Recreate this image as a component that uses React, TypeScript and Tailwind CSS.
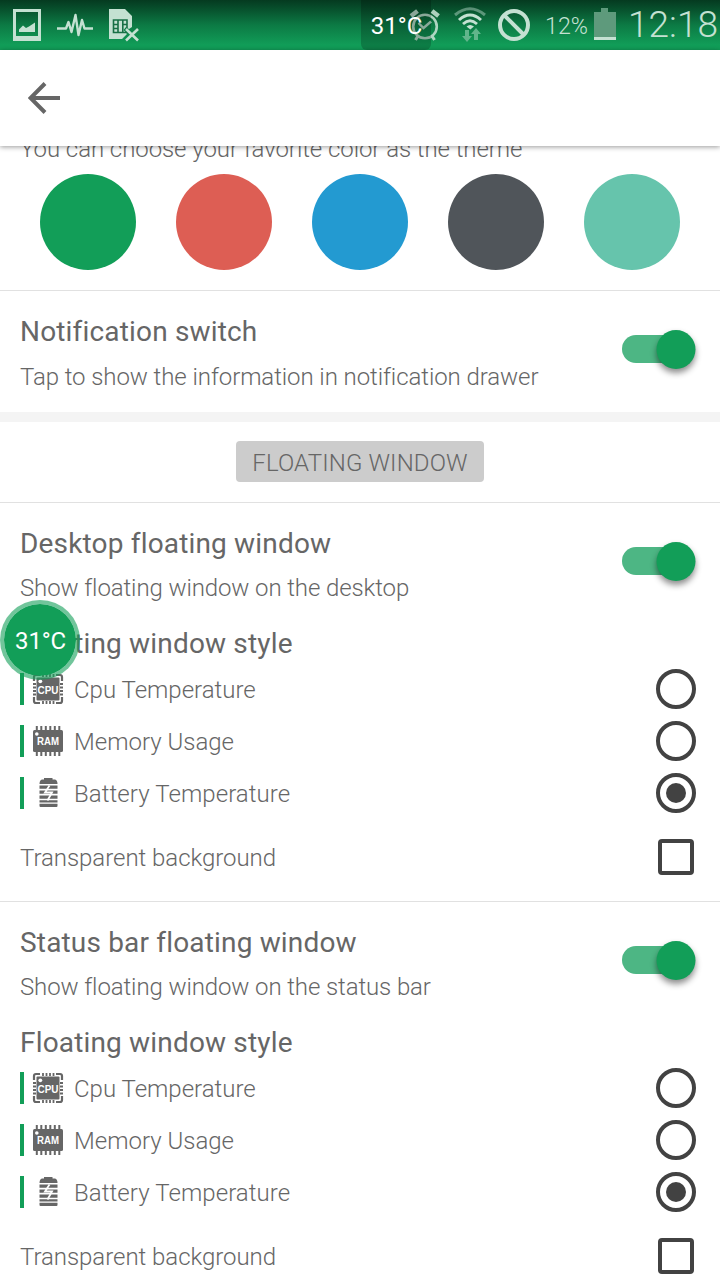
import { useState } from "react";

const THEME_COLORS = ["#129e58", "#dd5e54", "#239ad1", "#50555a", "#66c4ac"];

const STYLES = ["Cpu Temperature", "Memory Usage", "Battery Temperature"];

function StatusBar() {
  return (
    <header className="relative h-[50px] shrink-0 overflow-hidden bg-linear-to-b from-[#053a20] via-[#0c7a44] via-50% to-[#119d58] to-90%">
      <svg
        width="720"
        height="50"
        viewBox="0 0 720 50"
        fill="none"
        stroke="#c4e1d2"
      >
        {/* picture */}
        <path
          d="M13 9H41V41H13ZM16 12V36H38V12Z"
          fill="#c4e1d2"
          fillRule="evenodd"
          stroke="none"
        />
        <path d="M19 32V29.500L23 25.500L26 28L29 26.500L35 22.500V32Z" fill="#c4e1d2" stroke="none" />

        {/* pulse */}
        <path
          d="M57 28.500H66L68.500 22L71.500 32L75.500 15L78.500 35L82 20L84.500 28.500H93"
          strokeWidth="2.400"
          strokeLinejoin="round"
        />

        {/* missing sim */}
        <path
          d="M109 9H125L132 16V27L129 29L126 27L123.500 30L127 34L122 39H109Z"
          fill="#c4e1d2"
          stroke="none"
        />
        <path
          d="M113.500 20H127V32.500H113.500ZM118 20V33M122.800 20V33M113.500 24.500H118M123 24.500H127M113.500 28.500H118"
          stroke="#176f45"
          strokeWidth="1.600"
        />
        <path d="M126 29L138 40.500M138 29L126 40.500" strokeWidth="2.600" />

        {/* alarm */}
        <g opacity=".88">
          <circle cx="425" cy="26.500" r="11.800" strokeWidth="2.600" />
          <path d="M418.500 23L423.500 28L431 21.500" strokeWidth="2.400" />
          <path d="M411 16L417.500 11M432 11L438.500 16" strokeWidth="4.500" />
          <path d="M418 36L415.500 40M432 36L434.500 40" strokeWidth="3" />
        </g>

        {/* wifi */}
        <path d="M455 15Q470 2.500 485 15" strokeWidth="3" opacity=".45" />
        <path d="M459 20Q470 10 481 20" strokeWidth="3" />
        <path d="M463 24Q470 17.500 477 24" strokeWidth="2.800" />
        <path d="M466.500 26.500Q470 23.500 474 26.500L470.300 29.500Z" fill="#c4e1d2" stroke="none" />
        <path
          d="M465 30H469V36H472L467 42L462 36H465ZM474 40H478V34H481L476 28L471 34H474Z"
          fill="#61b58b"
          stroke="none"
        />

        {/* blocked */}
        <circle cx="514" cy="25" r="14" strokeWidth="4" />
        <path d="M504 15L524 35" strokeWidth="4" />

        {/* battery */}
        <path d="M594 12H601V8H608V12H616V37H594Z" fill="#5e9a7c" stroke="none" />
        <path d="M594 37H616V40H594Z" fill="#c4e1d2" stroke="none" />

        <text x="545" y="34" fontSize="24" fill="#c4e1d2" stroke="none" textLength="43" lengthAdjust="spacingAndGlyphs" fontWeight="300">
          12%
        </text>
        <text x="628" y="37" fontSize="37" fontWeight="300" fill="#c4e1d2" stroke="none" textLength="90">
          12:18
        </text>
      </svg>
      <div className="absolute top-0 left-[361px] h-[50px] w-[70px] rounded-b-md bg-black/20 pl-px text-center text-2xl leading-[52px] text-white">
        31°C
      </div>
    </header>
  );
}

function Toggle() {
  const [on, setOn] = useState(true);

  return (
    <button
      role="switch"
      aria-checked={on}
      onClick={() => setOn(!on)}
      className={`flex h-7 w-[73px] items-center rounded-full ${on ? "justify-end bg-[#4db684]" : "justify-start bg-gray-300"}`}
    >
      <span className="size-[39px] shrink-0 translate-x-[0.5px] rounded-full bg-[#129e58] shadow-[0_4px_6px_rgba(0,0,0,0.45)]" />
    </button>
  );
}

function CpuIcon() {
  return (
    <svg width="32" height="32" viewBox="0 0 32 32" fill="#666">
      <path
        d="M8 2H4Q2 2 2 4V8M24 2H28Q30 2 30 4V8M2 24V28Q2 30 4 30H8M24 30H28Q30 30 30 28V24"
        fill="none"
        stroke="#666"
        strokeWidth="2.200"
      />
      <path
        d="M11 1V4M14.500 1V4M18 1V4M21.500 1V4M11 28V31M14.500 28V31M18 28V31M21.500 28V31M1 11H4M1 14.500H4M1 18H4M1 21.500H4M28 11H31M28 14.500H31M28 18H31M28 21.500H31"
        stroke="#666"
        strokeWidth="1.800"
      />
      <rect x="4.500" y="4.500" width="23" height="23" rx="1" />
      <circle cx="8.300" cy="8.300" r="1.900" fill="white" />
      <text
        x="5.500"
        y="20.500"
        fontSize="10"
        fontWeight="700"
        fill="white"
        textLength="21"
        lengthAdjust="spacingAndGlyphs"
        className="font-['Liberation_Sans',sans-serif]"
      >
        CPU
      </text>
    </svg>
  );
}

function RamIcon() {
  return (
    <svg width="32" height="32" viewBox="0 0 32 32" fill="#666">
      <path
        d="M4.800 1V31M9.300 1V31M13.800 1V31M18.300 1V31M22.800 1V31M27.300 1V31"
        stroke="#666"
        strokeWidth="2"
      />
      <rect x="1" y="5" width="30" height="22" rx="1.500" />
      <circle cx="4.800" cy="9" r="1.800" fill="white" />
      <text
        x="5"
        y="19.500"
        fontSize="10"
        fontWeight="700"
        fill="white"
        textLength="22"
        lengthAdjust="spacingAndGlyphs"
        className="font-['Liberation_Sans',sans-serif]"
      >
        RAM
      </text>
    </svg>
  );
}

function BatteryIcon() {
  return (
    <svg width="32" height="32" viewBox="0 0 32 32" fill="#666">
      <path d="M12 1H20.500V2.500H23Q25.500 3 25.500 7H7.500Q7.500 3 10 2.500H12Z" />
      <path d="M7.500 8.500H25.500V11.700H7.500ZM7.500 13.500H25.500V16.700H7.500ZM7.500 18.500H25.500V21.700H7.500ZM7.500 23.300H25.500V25.500H7.500ZM7.500 26.700H25.500V29Q25.500 30 24.500 30H8.500Q7.500 30 7.500 29Z" />
      <path
        d="M17.500 8.500L13 15.500H20L15.500 23.500"
        fill="none"
        stroke="white"
        strokeWidth="1.800"
      />
    </svg>
  );
}

const ICONS = [CpuIcon, RamIcon, BatteryIcon];

function WindowSection({ title, text }: { title: string; text: string }) {
  const [selected, setSelected] = useState(2);
  const [transparent, setTransparent] = useState(false);

  return (
    <section className="h-[399px] shrink-0 border-b border-[#e1e1e1] px-5 pt-6">
      <div className="flex justify-between pr-[5px]">
        <div>
          <h2 className="text-[28px] leading-[33px] tracking-[0.17px]">
            {title}
          </h2>
          <p className="mt-3.5 text-2xl leading-7 font-light tracking-[-0.11px]">
            {text}
          </p>
        </div>
        <div className="pt-5">
          <Toggle />
        </div>
      </div>
      <h3 className="mt-[25px] text-[28px] leading-[33px] tracking-[0.17px]">
        Floating window style
      </h3>
      <div className="mt-[3px]">
        {STYLES.map((name, i) => {
          const Icon = ICONS[i];
          return (
            <button
              key={name}
              onClick={() => setSelected(i)}
              className="flex h-[52px] w-full items-center pr-1 text-2xl font-light"
            >
              <span className="mr-2 h-8 w-1 bg-[#129e58]" />
              <Icon />
              <span
                className={`ml-2.5 pt-0.5 ${i === 2 ? "tracking-[0.08px]" : ""}`}
              >
                {name}
              </span>
              <span className="ml-auto flex size-10 items-center justify-center rounded-full border-4 border-[#424242]">
                {selected === i && (
                  <span className="size-5 rounded-full bg-[#424242]" />
                )}
              </span>
            </button>
          );
        })}
      </div>
      <button
        onClick={() => setTransparent(!transparent)}
        className="mt-3 flex h-[52px] w-full items-center justify-between pr-1.5 text-2xl font-light"
      >
        <span className="pt-0.5 tracking-[-0.04px]">
          Transparent background
        </span>
        <span
          className={`size-9 rounded border-4 border-[#424242] ${transparent ? "bg-[#424242]" : ""}`}
        />
      </button>
    </section>
  );
}

export default function App() {
  return (
    <div className="relative flex h-[1280px] w-[720px] flex-col overflow-hidden bg-white font-[Roboto,sans-serif] text-[#666]">
      <StatusBar />
      <nav className="z-10 flex h-24 shrink-0 items-center bg-white pl-7 shadow-[0_1px_5px_rgba(0,0,0,0.4)]">
        <svg width="32" height="32" viewBox="0 0 32 32" fill="none" stroke="#666" strokeWidth="4">
          <path d="M17 1.500L2.500 16L17 30.500M2.500 16H32" />
        </svg>
      </nav>

      <main className="flex min-h-0 flex-1 flex-col overflow-hidden">
        <section className="h-[145px] shrink-0 border-b border-[#e1e1e1]">
          <p className="-mt-[11px] pl-5 text-2xl leading-7 font-light tracking-[-0.07px]">
            You can choose your favorite color as the theme
          </p>
          <div className="mt-[11px] flex justify-between px-10">
            {THEME_COLORS.map((color) => (
              <button
                key={color}
                aria-label={color}
                className="size-24 rounded-full"
                style={{ backgroundColor: color }}
              />
            ))}
          </div>
        </section>

        <section className="flex h-[131px] shrink-0 justify-between border-b-10 border-[#f4f4f4] pt-6 pr-[25px] pl-5">
          <div>
            <h2 className="text-[28px] leading-[33px] tracking-[0.17px]">
              Notification switch
            </h2>
            <p className="mt-[15px] text-2xl leading-7 font-light tracking-[-0.08px]">
              Tap to show the information in notification drawer
            </p>
          </div>
          <div className="pt-5">
            <Toggle />
          </div>
        </section>

        <div className="flex h-[81px] shrink-0 justify-center border-b border-[#e1e1e1] pt-[19px]">
          <span className="flex h-[41px] w-[248px] items-center justify-center rounded bg-[#ccc] pt-[3px] text-2xl font-light tracking-[0.14px]">
            FLOATING WINDOW
          </span>
        </div>

        <WindowSection
          title="Desktop floating window"
          text="Show floating window on the desktop"
        />
        <WindowSection
          title="Status bar floating window"
          text="Show floating window on the status bar"
        />
      </main>

      <div className="absolute top-[600px] left-0 z-20 flex size-20 items-center justify-center rounded-full border-4 border-[#129e58]/60 bg-[#129e58] bg-clip-padding pt-0.5 pl-px text-2xl tracking-[-0.2px] text-white">
        31°C
      </div>
    </div>
  );
}
